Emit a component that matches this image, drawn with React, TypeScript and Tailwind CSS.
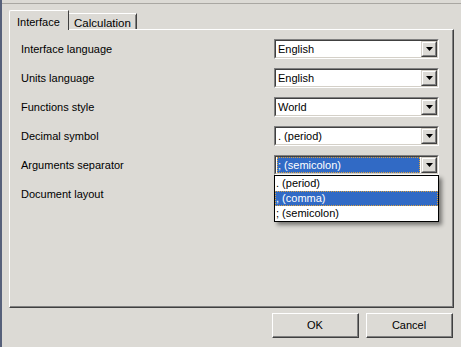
import React from "react";

const font = { fontFamily: '"Liberation Sans", Arial, sans-serif' };

function Arrow() {
  return (
    <div className="w-[16px] h-[16px] border-t border-l border-t-[#d4d0c8] border-l-[#d4d0c8] border-b border-r border-b-[#404040] border-r-[#404040] bg-[#dcdad5]">
      <div className="w-full h-full border-t border-l border-t-white border-l-white border-b border-r border-b-[#808080] border-r-[#808080] flex items-center justify-center">
        <svg width="7" height="4" viewBox="0 0 7 4">
          <polygon points="0,0 7,0 3.5,4" fill="#000" />
        </svg>
      </div>
    </div>
  );
}

function Combo({ value, focused }: { value: string; focused?: boolean }) {
  return (
    <div className="w-[165px] h-[20px] border-t border-l border-t-[#808080] border-l-[#808080] border-b border-r border-b-white border-r-white">
      <div className="w-full h-full border-t border-l border-t-[#404040] border-l-[#404040] border-b border-r border-b-[#d4d0c8] border-r-[#d4d0c8] bg-white flex items-center">
        <div className="flex-1 h-full flex items-center pl-[1px] pr-[1px]">
          {focused ? (
            <div className="w-full h-[16px] bg-[#316ac5] text-white flex items-center pl-[1px] outline outline-1 outline-dotted outline-[#d9a040] -outline-offset-1 text-[11px] leading-none">
              {value}
            </div>
          ) : (
            <span className="text-[11px] text-black leading-none pl-[1px]">{value}</span>
          )}
        </div>
        <Arrow />
      </div>
    </div>
  );
}

const rows: { label: string; value?: string; focused?: boolean }[] = [
  { label: "Interface language", value: "English" },
  { label: "Units language", value: "English" },
  { label: "Functions style", value: "World" },
  { label: "Decimal symbol", value: ". (period)" },
  { label: "Arguments separator", value: "; (semicolon)", focused: true },
  { label: "Document layout" },
];

function Button({ children }: { children: React.ReactNode }) {
  return (
    <div className="w-[87px] h-[25px] border-t border-l border-t-white border-l-white border-b border-r border-b-[#404040] border-r-[#404040] bg-[#dcdad5]">
      <div className="w-full h-full border-b border-r border-b-[#808080] border-r-[#808080] flex items-center justify-center text-[11px] text-black">
        {children}
      </div>
    </div>
  );
}

export default function App() {
  return (
    <div
      className="relative w-[461px] h-[347px] bg-[#dcdad5] border-l-2 border-l-[#56607a] flex flex-col overflow-hidden"
      style={font}
    >
      <div className="h-[4px] border-b border-b-[#a9a7a2]" />
      <div className="relative z-10 flex items-end h-[20px] -mb-px ml-[7px] mt-[6px]">
        <div className="w-[60px] h-[20px] bg-[#dcdad5] border-t border-l border-t-white border-l-white border-r border-r-[#404040] rounded-tl-[2px] flex items-start pl-[7px] pt-[3px] text-[11px] text-black">
          Interface
        </div>
        <div className="w-[68px] h-[16px] mb-px bg-[#dcdad5] border-t border-t-white border-r border-r-[#404040] flex items-start pl-[5px] pt-[1px] text-[11.5px] text-black">
          <div className="w-full h-full border-r border-r-[#808080]">Calculation</div>
        </div>
      </div>
      <div className="ml-[7px] w-[445px] h-[279px] border-t border-l border-t-white border-l-white border-b border-r border-b-[#404040] border-r-[#404040]">
        <div className="w-full h-full border-b border-r border-b-[#808080] border-r-[#808080] pl-[11px] pt-[9px]">
          <div className="grid grid-cols-[253px_165px] auto-rows-[20px] gap-y-[9px]">
            {rows.map((r) => (
              <React.Fragment key={r.label}>
                <div className="flex items-center text-[11px] text-black">{r.label}</div>
                <div>{r.value ? <Combo value={r.value} focused={r.focused} /> : null}</div>
              </React.Fragment>
            ))}
          </div>
        </div>
      </div>
      <div className="flex justify-end gap-[7px] pr-[8px] mt-[5px]">
        <Button>OK</Button>
        <Button>Cancel</Button>
      </div>
      <div className="absolute left-[272px] top-[175px] w-[165px] h-[47px] bg-white border border-black shadow-[3px_3px_4px_rgba(0,0,0,0.45)] flex flex-col text-[11px] text-black">
        <div className="h-[15px] flex items-center pl-[1px]">. (period)</div>
        <div className="h-[15px] flex items-center pl-[1px] bg-[#316ac5] text-white outline outline-1 outline-dotted outline-[#d9a040] -outline-offset-1">
          , (comma)
        </div>
        <div className="h-[15px] flex items-center pl-[1px]">; (semicolon)</div>
      </div>
    </div>
  );
}
